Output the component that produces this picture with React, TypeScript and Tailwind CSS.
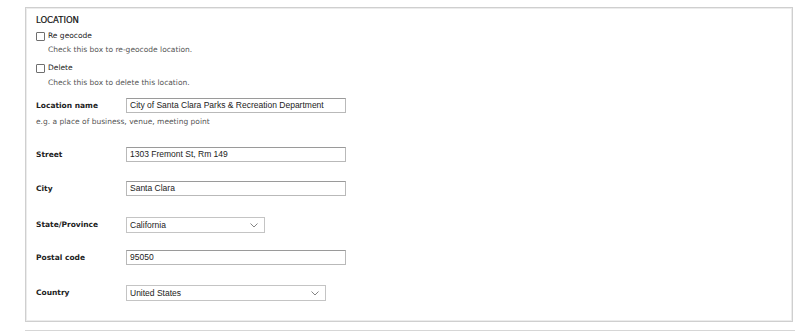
const labelFont = "font-['DejaVu_Sans',sans-serif]";
const inputFont = "font-['Liberation_Sans',Arial,sans-serif]";

function Checkbox({ label }: { label: string }) {
  return (
    <div className="flex items-center h-[12px]">
      <span className="w-[9px] h-[9px] border border-[#6f6f6f] rounded-[1px] bg-white" />
      <span className={`${labelFont} ml-[3px] text-[7.5px] text-[#222] leading-[12px]`}>{label}</span>
    </div>
  );
}

function Help({ text, indent }: { text: string; indent?: boolean }) {
  return (
    <p
      className={`${labelFont} text-[7.5px] leading-[12px] text-[#555] ${
        indent ? 'pl-[12px]' : ''
      }`}
    >
      {text}
    </p>
  );
}

function TextField({ label, value, width = 'w-[220px]', mt }: { label: string; value: string; width?: string; mt: string }) {
  return (
    <div className={`flex items-center ${mt}`}>
      <span className={`${labelFont} w-[90px] text-[7.5px] font-bold text-[#222]`}>{label}</span>
      <div
        className={`${width} h-[15px] border border-[#b9b9b9] border-t-[#9a9a9a] bg-white flex items-center pl-[3px]`}
      >
        <span className={`${inputFont} text-[8.5px] text-[#222] leading-none`}>{value}</span>
      </div>
    </div>
  );
}

function SelectField({ label, value, width, mt }: { label: string; value: string; width: string; mt: string }) {
  return (
    <div className={`flex items-center ${mt}`}>
      <span className={`${labelFont} w-[90px] text-[7.5px] font-bold text-[#222]`}>{label}</span>
      <div
        className={`${width} h-[16px] border border-[#c4c4c4] bg-white flex items-center justify-between pl-[3px] pr-[6px]`}
      >
        <span className={`${inputFont} text-[8.5px] text-[#222] leading-none`}>{value}</span>
        <svg width="8" height="5" viewBox="0 0 8 5" fill="none">
          <path d="M0.5 0.5 L4 4 L7.5 0.5" stroke="#777" strokeWidth="0.9" />
        </svg>
      </div>
    </div>
  );
}

export default function App() {
  return (
    <div className="w-[800px] h-[331px] bg-white overflow-hidden">
      <div className="ml-[25px] mt-[7px] w-[768px] h-[315px] border border-[#cfcfcf] shadow-[inset_0_0_0_1px_#ececec] pl-[10px]">
        <p className={`${labelFont} mt-[6px] h-[12px] text-[8.5px] leading-[12px] text-[#111] [-webkit-text-stroke:0.2px_#111]`}>
          LOCATION
        </p>
        <div className="mt-[4px]">
          <Checkbox label="Re geocode" />
        </div>
        <div className="mt-[2px]">
          <Help text="Check this box to re-geocode location." indent />
        </div>
        <div className="mt-[6px]">
          <Checkbox label="Delete" />
        </div>
        <div className="mt-[3px]">
          <Help text="Check this box to delete this location." indent />
        </div>
        <TextField label="Location name" value="City of Santa Clara Parks & Recreation Department" mt="mt-[9px]" />
        <div className="mt-[3px]">
          <Help text="e.g. a place of business, venue, meeting point" />
        </div>
        <TextField label="Street" value="1303 Fremont St, Rm 149" mt="mt-[19px]" />
        <TextField label="City" value="Santa Clara" mt="mt-[19px]" />
        <SelectField label="State/Province" value="California" width="w-[139px]" mt="mt-[21px]" />
        <TextField label="Postal code" value="95050" mt="mt-[17px]" />
        <SelectField label="Country" value="United States" width="w-[200px]" mt="mt-[20px]" />
      </div>
      <div className="ml-[25px] mt-[8px] w-[770px] h-[10px] border-t border-l border-[#d6d6d6]" />
    </div>
  );
}
